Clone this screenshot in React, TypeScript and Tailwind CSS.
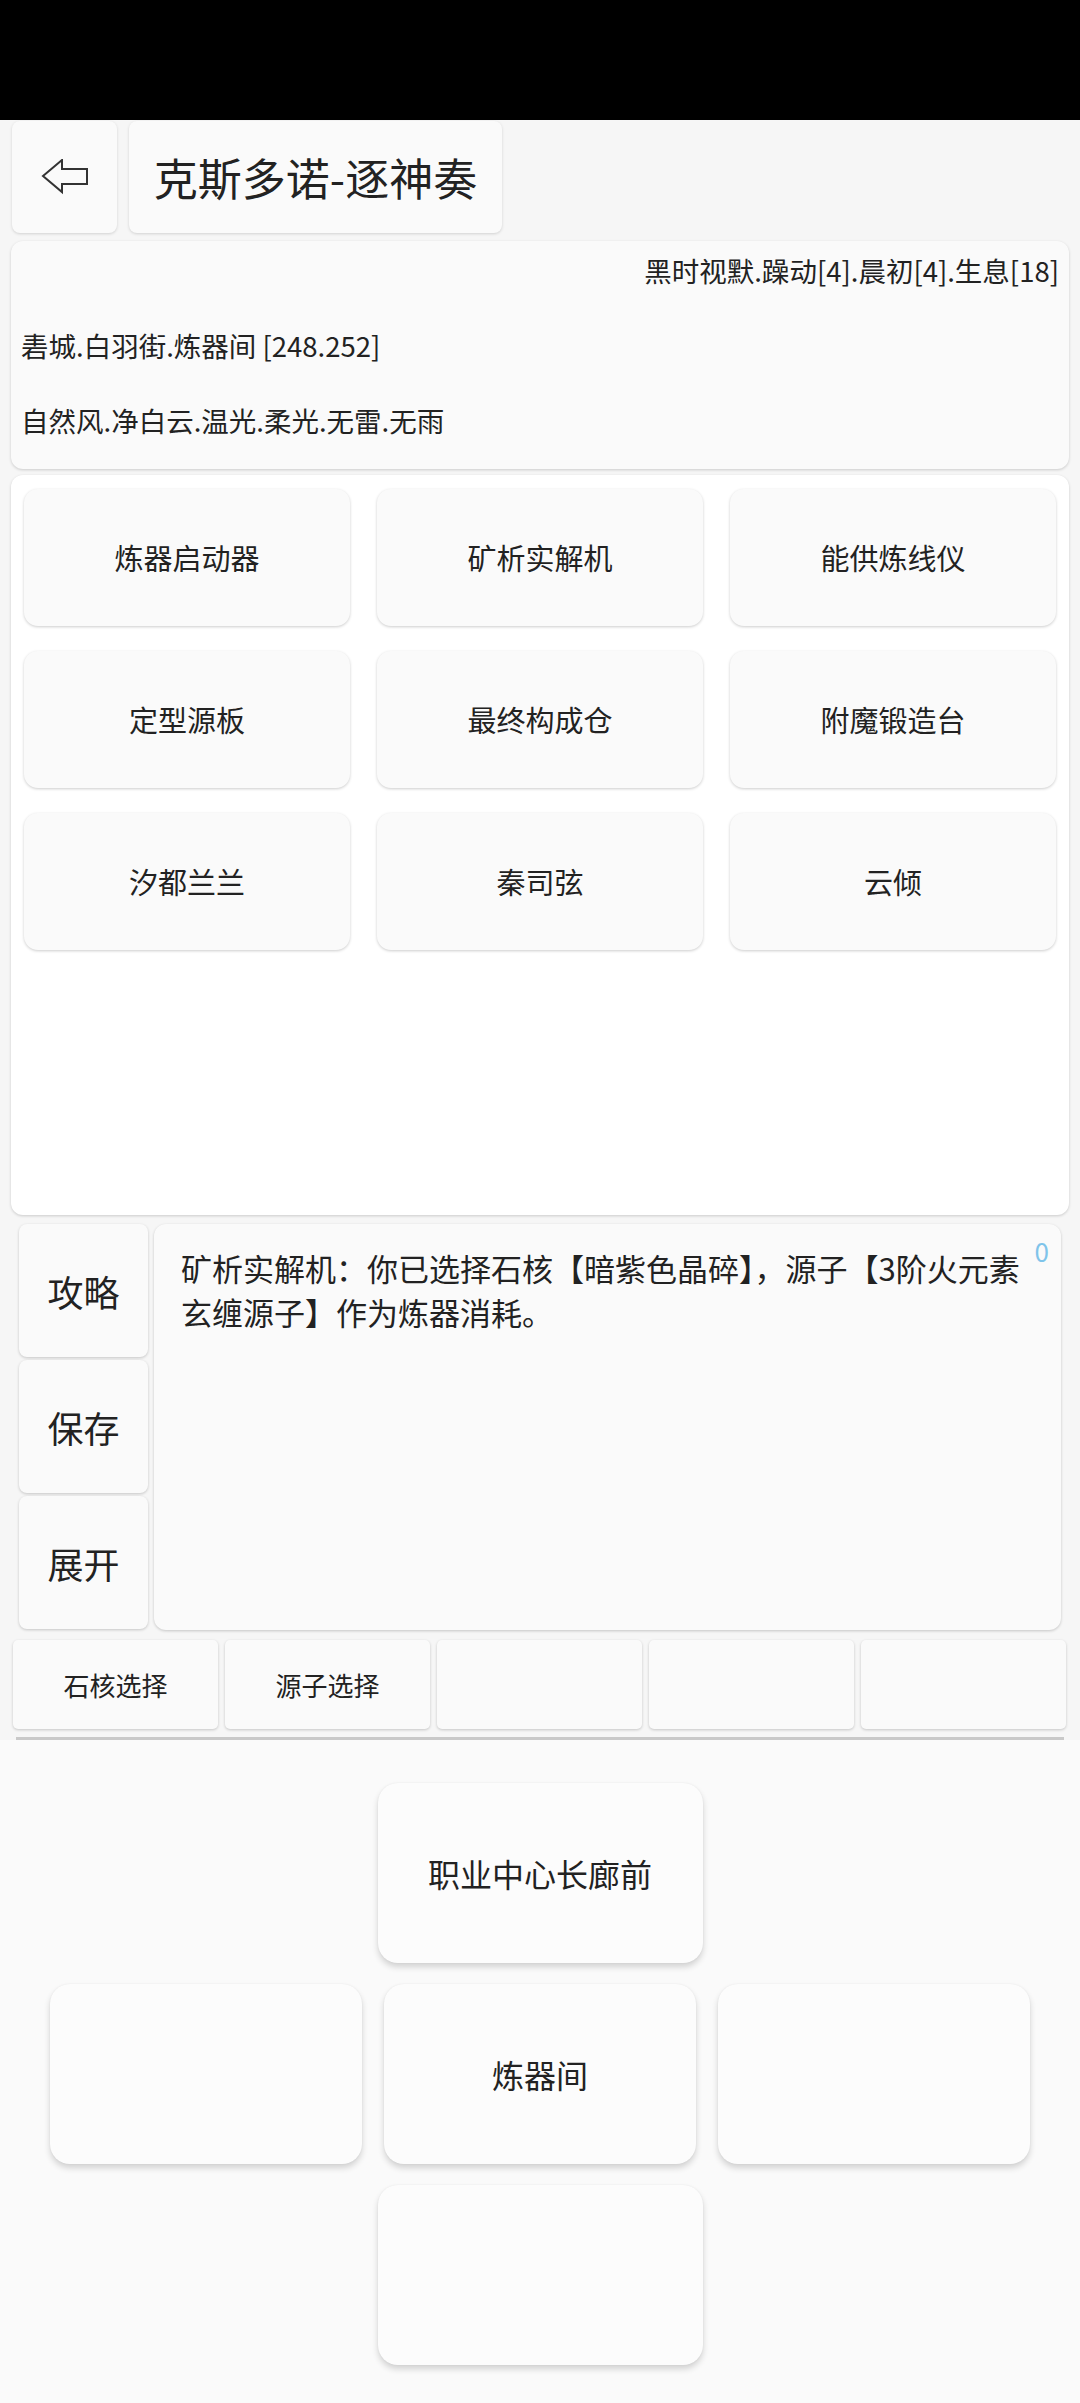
import React from "react";

const font = { fontFamily: '"Noto Sans CJK SC", "Noto Sans", sans-serif' };

const machines = [
  "炼器启动器",
  "矿析实解机",
  "能供炼线仪",
  "定型源板",
  "最终构成仓",
  "附魔锻造台",
  "汐都兰兰",
  "秦司弦",
  "云倾",
];

const tabs = ["石核选择", "源子选择", "", "", ""];

function BackArrow() {
  return (
    <svg width="48" height="36" viewBox="0 0 48 36" fill="none">
      <path
        d="M2 17 L21 1 L21 10 L46 10 L46 25 L21 25 L21 33 Z"
        stroke="#333"
        strokeWidth="2"
        strokeLinejoin="miter"
        fill="none"
      />
    </svg>
  );
}

function NavCard({ label, className = "" }: { label?: string; className?: string }) {
  return (
    <div
      className={`h-[180px] rounded-[20px] bg-[#fcfcfc] shadow-[0_4px_6px_rgba(0,0,0,0.16),0_0_2px_rgba(0,0,0,0.06)] flex items-center justify-center text-[32px] text-[#222] ${className}`}
    >
      {label}
    </div>
  );
}

export default function App() {
  return (
    <div className="w-[1080px] min-h-[2403px] bg-[#f6f6f6] text-[#222]" style={font}>
      {/* status bar */}
      <div className="h-[120px] bg-black" />

      {/* header */}
      <div className="flex gap-[12px] pl-[12px] pt-[1px]">
        <div className="w-[105px] h-[112px] rounded-[8px] bg-[#fafafa] shadow-[0_1px_3px_rgba(0,0,0,0.15)] flex items-center justify-center">
          <BackArrow />
        </div>
        <div className="w-[373px] h-[112px] rounded-[8px] bg-[#fafafa] shadow-[0_1px_3px_rgba(0,0,0,0.15)] flex items-center justify-center text-[44px] text-[#222]">
          克斯多诺-逐神奏
        </div>
      </div>

      {/* info card */}
      <div className="mx-[11px] mt-[8px] h-[228px] rounded-[12px] bg-[#fafafa] shadow-[0_1px_3px_rgba(0,0,0,0.18)] flex flex-col pt-[9px] px-[10px] text-[27.5px] text-[#222]">
        <div className="leading-[40px] text-right">黑时视默.躁动[4].晨初[4].生息[18]</div>
        <div className="leading-[40px] mt-[35px]">砉城.白羽街.炼器间 [248.252]</div>
        <div className="leading-[40px] mt-[35px]">自然风.净白云.温光.柔光.无雷.无雨</div>
      </div>

      {/* machines grid */}
      <div className="mx-[11px] mt-[6px] h-[740px] rounded-[12px] bg-white shadow-[0_1px_3px_rgba(0,0,0,0.18)] px-[13px] pt-[14px]">
        <div className="grid grid-cols-3 gap-x-[27px] gap-y-[25px]">
          {machines.map((m) => (
            <div
              key={m}
              className="h-[137px] rounded-[14px] bg-[#fafafa] shadow-[0_1px_3px_rgba(0,0,0,0.2)] flex items-center justify-center text-[29px] text-[#222]"
            >
              {m}
            </div>
          ))}
        </div>
      </div>

      {/* log area */}
      <div className="flex mt-[9px] pl-[19px] gap-[6px]">
        <div className="flex flex-col gap-[3px] w-[129px]">
          {["攻略", "保存", "展开"].map((b) => (
            <div
              key={b}
              className="h-[133px] rounded-[8px] bg-[#fafafa] shadow-[0_1px_3px_rgba(0,0,0,0.2)] flex items-center justify-center text-[36px] text-[#222]"
            >
              {b}
            </div>
          ))}
        </div>
        <div className="relative w-[907px] h-[406px] rounded-[12px] bg-[#fafafa] shadow-[0_1px_3px_rgba(0,0,0,0.2)] pl-[27px] pr-[40px] pt-[22px] text-[31px] leading-[44px] text-[#222]">
          矿析实解机：你已选择石核【暗紫色晶碎】，源子【3阶火元素玄缠源子】作为炼器消耗。
          <span className="absolute top-[12px] right-[12px] text-[26px] leading-[30px] text-[#7fc4ea]">0</span>
        </div>
      </div>

      {/* tabs */}
      <div className="flex gap-[7px] pl-[13px] mt-[10px]">
        {tabs.map((t, i) => (
          <div
            key={i}
            className="w-[205px] h-[89px] rounded-[5px] bg-[#fafafa] shadow-[0_1px_3px_rgba(0,0,0,0.2)] flex items-center justify-center text-[26px] text-[#222]"
          >
            {t}
          </div>
        ))}
      </div>

      {/* divider */}
      <div className="mx-[16px] mt-[8px] h-[3px] bg-[#c9c9c9]" />

      {/* navigation */}
      <div className="bg-[#fafafa] pt-[43px] pb-[38px] flex flex-col items-center gap-[21px]">
        <NavCard label="职业中心长廊前" className="w-[325px]" />
        <div className="flex gap-[22px]">
          <NavCard className="w-[312px]" />
          <NavCard label="炼器间" className="w-[312px]" />
          <NavCard className="w-[312px]" />
        </div>
        <NavCard className="w-[325px]" />
      </div>
    </div>
  );
}
